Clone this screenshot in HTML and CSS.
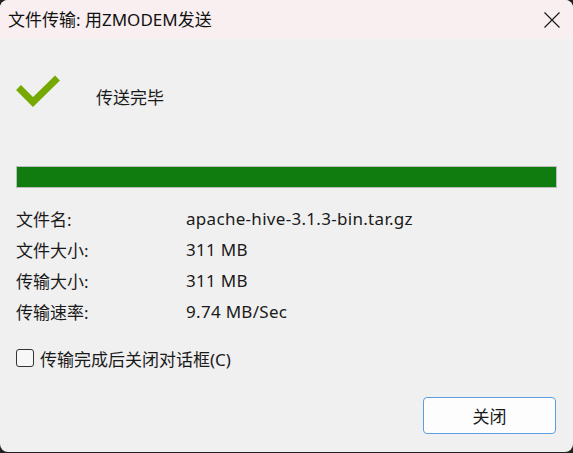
FILE: index.html
```html
<!DOCTYPE html>
<html lang="zh-CN">
<head>
<meta charset="utf-8">
<title>文件传输</title>
<link rel="stylesheet" href="styles.css">
</head>
<body>
<div class="window">
  <div class="titlebar">
    <span class="title">文件传输: 用ZMODEM发送</span>
    <span class="close">
      <svg width="16" height="16" viewBox="0 0 16 16"><path d="M0.5 0.5 L15.5 15.5 M15.5 0.5 L0.5 15.5" stroke="#1a1a1a" stroke-width="1.2" fill="none"/></svg>
    </span>
  </div>
  <div class="content">
    <div class="status">
      <svg class="check" width="46" height="32" viewBox="0 0 46 32"><polyline points="2.5,12.5 17,27 41.5,3" fill="none" stroke="#75a800" stroke-width="7" stroke-linejoin="miter"/></svg>
      <span class="status-text">传送完毕</span>
    </div>
    <div class="progress"><div class="progress-fill"></div></div>
    <div class="info">
      <span class="label">文件名:</span><span class="value">apache-hive-3.1.3-bin.tar.gz</span>
      <span class="label">文件大小:</span><span class="value">311 MB</span>
      <span class="label">传输大小:</span><span class="value">311 MB</span>
      <span class="label">传输速率:</span><span class="value">9.74 MB/Sec</span>
    </div>
    <label class="option"><span class="box"></span><span>传输完成后关闭对话框(C)</span></label>
    <div class="actions"><button class="btn">关闭</button></div>
  </div>
</div>
</body>
</html>
```
FILE: styles.css
```css
html, body {
  margin: 0;
  padding: 0;
  background: #202020;
}
body {
  font-family: "Noto Sans", "Noto Sans CJK SC", sans-serif;
  font-size: 17px;
  color: #1a1a1a;
}
.window {
  width: 573px;
  height: 452px;
  background: #f0f0f0;
  border-radius: 8px;
  overflow: hidden;
  display: flex;
  flex-direction: column;
}
.titlebar {
  height: 39px;
  background: #f9eff0;
  display: flex;
  align-items: center;
  justify-content: space-between;
  padding-left: 8px;
  flex-shrink: 0;
}
.title {
  font-size: 17px;
  line-height: 20px;
  color: #111;
}
.close {
  width: 43px;
  height: 39px;
  display: flex;
  align-items: center;
  justify-content: center;
}
.content {
  padding: 0 16px;
  display: flex;
  flex-direction: column;
}
.status {
  display: flex;
  align-items: flex-start;
  margin-top: 36px;
  height: 32px;
}
.check {
  display: block;
}
.status-text {
  margin-left: 34px;
  margin-top: 12px;
  line-height: 22px;
}
.progress {
  margin-top: 59px;
  height: 20px;
  border: 1px solid #bcbcbc;
  background: #e6e6e6;
}
.progress-fill {
  height: 100%;
  width: 100%;
  background: #107c10;
}
.info {
  margin-top: 15px;
  display: grid;
  grid-template-columns: 170px auto;
  grid-auto-rows: 31px;
  align-items: center;
}
.value {
  letter-spacing: 0.3px;
}
.option {
  margin-top: 20px;
  height: 22px;
  display: flex;
  align-items: center;
  gap: 6px;
}
.box {
  width: 16px;
  height: 16px;
  border: 1px solid #333;
  border-radius: 3px;
  background: #f7f7f7;
}
.actions {
  margin-top: 28px;
  display: flex;
  justify-content: flex-end;
  padding-right: 1px;
}
.btn {
  width: 133px;
  height: 37px;
  background: #fdfdfd;
  border: 1px solid #5a9fe0;
  border-radius: 4px;
  font-family: "Noto Sans", "Noto Sans CJK SC", sans-serif;
  font-size: 17px;
  color: #1a1a1a;
  padding: 0;
}
```
